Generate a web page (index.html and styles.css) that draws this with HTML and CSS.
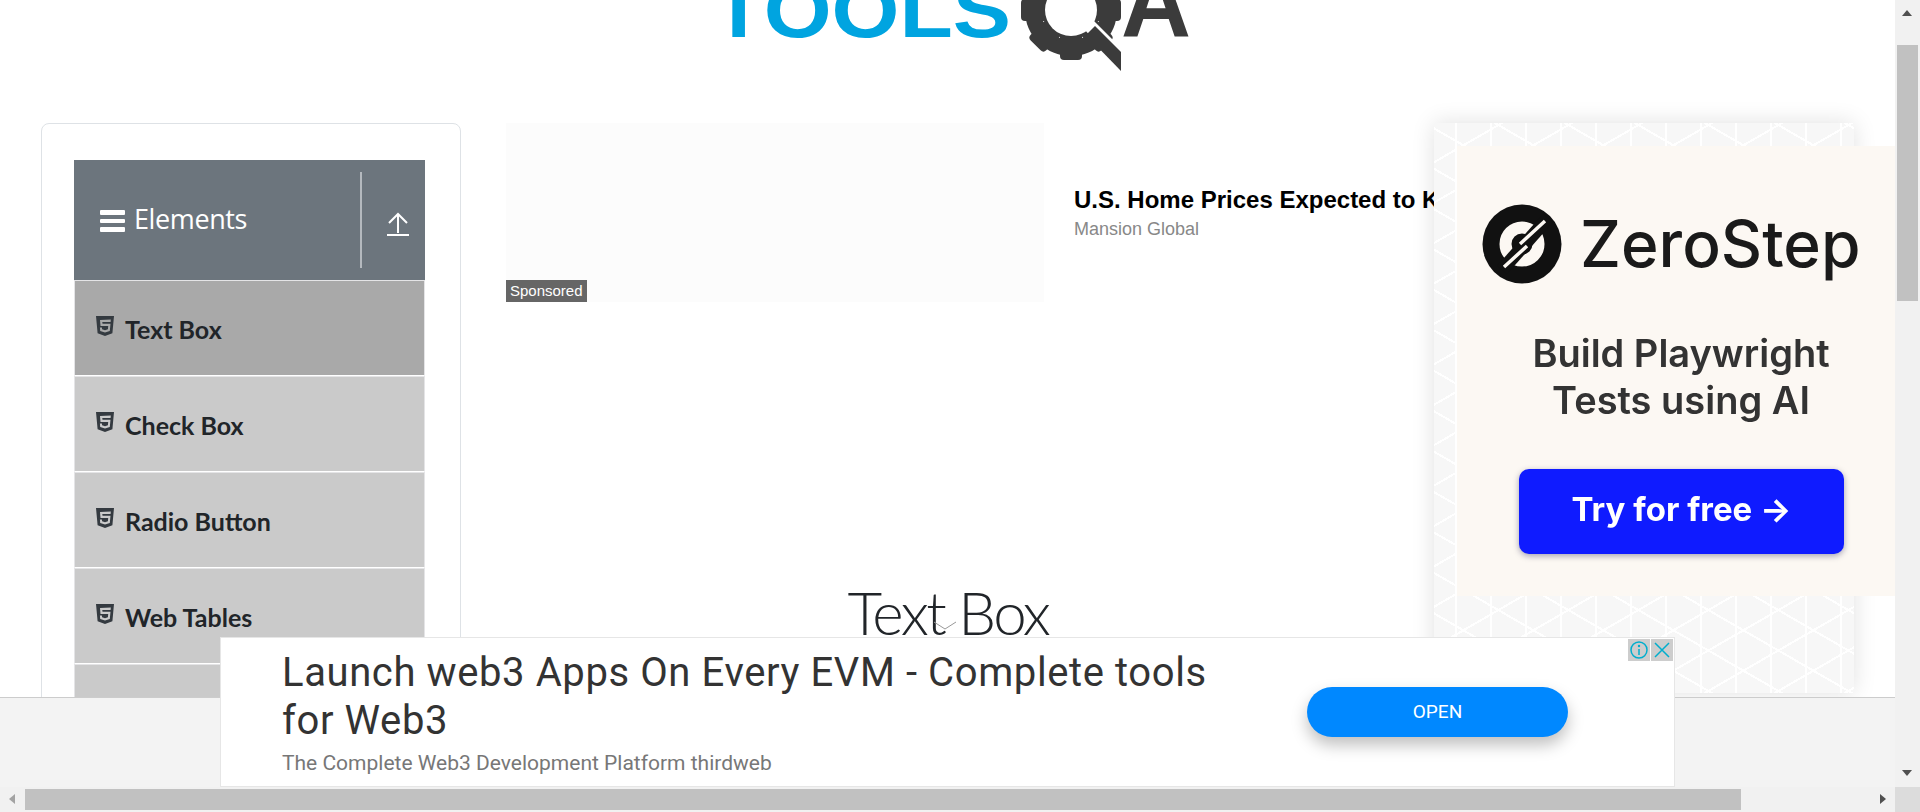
FILE: index.html
```html
<!DOCTYPE html>
<html lang="en">
<head>
  <meta charset="UTF-8">
  <meta name="viewport" content="width=device-width, initial-scale=1.0">
  <title>Text Box</title>
  <link rel="stylesheet" href="styles.css">
</head>
<body>

  <div class="window">
    <div class="viewRow">
      <div class="viewport">

        <!-- Logo, page is scrolled so only the bottom is visible -->
        <header class="pageHeader">
          <svg class="logo" width="500" height="72" viewBox="0 0 500 72">
            <text class="logoTools" x="12" y="37" textLength="299" lengthAdjust="spacingAndGlyphs">TOOLS</text>
            <g transform="translate(371 10)">
              <circle class="gearRing" r="38" />
              <g class="gearTeeth">
                <rect x="-11" y="-50" width="22" height="100" rx="4" />
                <rect x="-11" y="-50" width="22" height="100" rx="4" transform="rotate(45)" />
                <rect x="-11" y="-50" width="22" height="100" rx="4" transform="rotate(90)" />
                <rect x="-11" y="-50" width="22" height="100" rx="4" transform="rotate(135)" />
              </g>
              <circle class="gearHole" r="26" />
            </g>
            <polygon class="logoCut" points="384,29 393,20 429,56 429,78" />
            <polygon class="logoDark" points="386,35 395,26 421,52 421,71" />
            <text class="logoA" x="421" y="37" textLength="70" lengthAdjust="spacingAndGlyphs">A</text>
          </svg>
        </header>

        <div class="columns">

          <!-- Left menu -->
          <aside class="sideCard">
            <div class="groupHeader">
              <div class="groupTitle">
                <svg class="menuIcon" width="25" height="22" viewBox="0 0 25 22">
                  <rect x="0" y="0" width="25" height="5" rx="1" />
                  <rect x="0" y="9" width="25" height="4" rx="1" />
                  <rect x="0" y="17" width="25" height="5" rx="1" />
                </svg>
                <span>Elements</span>
              </div>
              <div class="groupToggle">
                <svg width="22" height="24" viewBox="0 0 22 24">
                  <path class="uploadStroke" d="M11 21V3M2 11l9-9 9 9M0 23h22" />
                </svg>
              </div>
            </div>
            <ul class="menuList">
              <li class="menuItem active"><svg class="htmlIcon" viewBox="0 0 18 20"><use href="#html5" /></svg>Text Box</li>
              <li class="menuItem"><svg class="htmlIcon" viewBox="0 0 18 20"><use href="#html5" /></svg>Check Box</li>
              <li class="menuItem"><svg class="htmlIcon" viewBox="0 0 18 20"><use href="#html5" /></svg>Radio Button</li>
              <li class="menuItem"><svg class="htmlIcon" viewBox="0 0 18 20"><use href="#html5" /></svg>Web Tables</li>
              <li class="menuItem"><svg class="htmlIcon" viewBox="0 0 18 20"><use href="#html5" /></svg>Buttons</li>
            </ul>
          </aside>

          <!-- Middle column -->
          <main class="mainColumn">
            <div class="sponsoredRow">
              <div class="sponsoredImage">
                <span class="sponsoredTag">Sponsored</span>
              </div>
              <div class="sponsoredText">
                <div class="sponsoredTitle">U.S. Home Prices Expected to Keep Climbing</div>
                <div class="sponsoredSource">Mansion Global</div>
              </div>
            </div>
            <div class="titleWrap">
              <h1 class="pageTitle">Text Box</h1>
              <svg class="titleChevron" width="24" height="9" viewBox="0 0 24 9">
                <path d="M1 1l11 7 11-7" />
              </svg>
            </div>
          </main>

          <!-- Right ad -->
          <div class="sideAd">
            <div class="zeroStep">
              <div class="zeroBrand">
                <svg class="zeroLogo" width="80" height="80" viewBox="0 0 80 80">
                  <circle cx="40" cy="40" r="39.5" fill="#111" />
                  <circle cx="40" cy="40" r="16.500" fill="none" stroke="#fcf8f3" stroke-width="12" />
                  <path d="M20 66L66 14" stroke="#111" stroke-width="13" />
                  <path d="M63 17L38 40M45 42L22 63" stroke="#fcf8f3" stroke-width="3.500" />
                </svg>
                <span>ZeroStep</span>
              </div>
              <div class="zeroText">Build Playwright<br>Tests using AI</div>
              <div class="zeroButton">Try for free →</div>
            </div>
          </div>

        </div>

        <!-- Sticky bottom ad -->
        <div class="bottomBar">
          <div class="bottomAd">
            <div class="bottomAdText">
              <div class="bottomAdTitle">Launch web3 Apps On Every EVM - Complete tools for Web3</div>
              <div class="bottomAdSub">The Complete Web3 Development Platform thirdweb</div>
            </div>
            <div class="openButton">OPEN</div>
            <div class="adBadges">
              <span class="adBadge">
                <svg width="18" height="18" viewBox="0 0 18 18">
                  <circle class="badgeStroke" cx="9" cy="9" r="8" />
                  <path class="badgeStroke" d="M9 8v6" />
                  <circle class="badgeDot" cx="9" cy="5" r="1.2" />
                </svg>
              </span>
              <span class="adBadge">
                <svg width="16" height="16" viewBox="0 0 16 16">
                  <path class="badgeStroke" d="M1 1l14 14M15 1L1 15" />
                </svg>
              </span>
            </div>
          </div>
        </div>

      </div>

      <div class="vScroll">
        <span class="arrow arrowUp"></span>
        <div class="vThumb"></div>
        <span class="arrow arrowDown"></span>
      </div>
    </div>

    <div class="hScrollRow">
      <div class="hScroll">
        <span class="arrow arrowLeft"></span>
        <div class="hThumb"></div>
        <span class="arrow arrowRight"></span>
      </div>
      <div class="scrollCorner"></div>
    </div>
  </div>

  <svg class="iconDefs" width="0" height="0">
    <symbol id="html5" viewBox="0 0 18 20">
      <path fill="#343a40" fill-rule="evenodd" d="M0 0h18l-1.6 17.2L9 20l-7.400-2.800zM4 4l.5 6h7.700l-.3 3.300-2.900.9-2.900-.9-.2-1.800H3.900l.3 3.500L9 16.500l4.800-1.500.7-7.200H6.500l-.2-1.700h8.300l.2-2.600z" />
    </symbol>
  </svg>

</body>
</html>
```

FILE: styles.css
```css
html, body {
  margin: 0;
  padding: 0;
  height: 100%;
  overflow: hidden;
  background-color: #fff;
}

.window {
  display: flex;
  flex-direction: column;
  width: 1920px;
  height: 812px;
}

.viewRow {
  display: flex;
  height: 787px;
}

.viewport {
  position: relative;
  width: 1895px;
  height: 787px;
  overflow: hidden;
}

/* logo */
.pageHeader {
  height: 123px;
  padding-left: 700px;
  box-sizing: border-box;
}

.logo {
  display: block;
}

.logoTools {
  font-family: "Liberation Sans", sans-serif;
  font-weight: 700;
  font-size: 78px;
  fill: #00a4e0;
}

.logoA {
  font-family: "Liberation Sans", sans-serif;
  font-weight: 700;
  font-size: 100px;
  fill: #3b3b3b;
}

.gearRing {
  fill: none;
  stroke: #3b3b3b;
  stroke-width: 16;
}

.gearTeeth rect {
  fill: #3b3b3b;
}

.gearHole {
  fill: #fff;
}

.logoCut {
  fill: #fff;
}

.logoDark {
  fill: #3b3b3b;
}

.columns {
  display: flex;
  align-items: flex-start;
  padding-left: 41px;
}

/* left menu */
.sideCard {
  flex: none;
  box-sizing: border-box;
  width: 420px;
  height: 800px;
  padding: 36px 35px 0 32px;
  border: 1px solid #dee2e6;
  border-radius: 8px;
  background-color: #fff;
}

.groupHeader {
  display: flex;
  align-items: stretch;
  height: 120px;
  padding: 12px 0;
  box-sizing: border-box;
  background-color: #6c757d;
  color: #fff;
}

.groupTitle {
  flex: 1;
  display: flex;
  align-items: center;
  gap: 9px;
  padding-left: 26px;
  font-family: "Open Sans", sans-serif;
  font-size: 27px;
  font-weight: 400;
  letter-spacing: -0.4px;
  border-right: 2px solid #b4b9be;
}

.groupTitle span {
  position: relative;
  top: -2px;
}

.menuIcon {
  fill: #fff;
  margin-top: 2px;
}

.groupToggle {
  flex: none;
  width: 63px;
  display: flex;
  align-items: center;
  justify-content: center;
  padding: 8px 0 0 9px;
  box-sizing: border-box;
}

.uploadStroke {
  fill: none;
  stroke: #fff;
  stroke-width: 2;
}

.menuList {
  list-style: none;
  margin: 0;
  padding: 0;
}

.menuItem {
  display: flex;
  align-items: center;
  gap: 11px;
  box-sizing: border-box;
  height: 96px;
  padding: 2px 0 0 21px;
  border: 1px solid #e4e4e6;
  border-bottom-color: #fff;
  background-color: #cacaca;
  color: #212529;
  font-family: "Lato", sans-serif;
  font-size: 25px;
  font-weight: 700;
}

.menuItem.active {
  background-color: #a9a9a9;
}

.htmlIcon {
  width: 18px;
  height: 20px;
  margin-top: -6px;
}

.iconDefs {
  position: absolute;
}

/* middle column */
.mainColumn {
  flex: none;
  width: 884px;
  margin-left: 45px;
}

.sponsoredRow {
  display: flex;
  align-items: center;
  width: 928px;
  height: 179px;
  overflow: hidden;
  font-family: "Liberation Sans", Arial, sans-serif;
}

.sponsoredImage {
  flex: none;
  position: relative;
  width: 538px;
  height: 179px;
  background-color: #fcfcfc;
}

.sponsoredTag {
  position: absolute;
  left: 0;
  bottom: 0;
  padding: 2px 4px;
  background-color: #666;
  color: #fff;
  font-size: 15px;
  line-height: 18px;
}

.sponsoredText {
  flex: none;
  margin-left: 30px;
  white-space: nowrap;
}

.sponsoredTitle {
  font-size: 24px;
  font-weight: 700;
  line-height: 28px;
  color: #000;
}

.sponsoredSource {
  margin-top: 4px;
  font-size: 18px;
  line-height: 22px;
  color: #888;
}

.titleWrap {
  position: relative;
  margin-top: 274px;
}

.pageTitle {
  margin: 0;
  text-align: center;
  font-family: "Lato", sans-serif;
  font-size: 60px;
  font-weight: 300;
  letter-spacing: -2.5px;
  line-height: 72px;
  color: #212529;
}

.titleChevron {
  position: absolute;
  left: 427px;
  top: 45px;
}

.titleChevron path {
  fill: none;
  stroke: #999;
  stroke-width: 1;
}

/* right ad */
.sideAd {
  flex: none;
  box-sizing: border-box;
  width: 420px;
  height: 570px;
  margin-left: 44px;
  padding: 23px 0 0 23px;
  background-color: #f7f7f7;
  background-image:
    repeating-linear-gradient(90deg, transparent 0 21px, #fff 21px 23px, transparent 23px 35px),
    repeating-linear-gradient(30deg, transparent 0 33px, #fff 33px 35px),
    repeating-linear-gradient(150deg, transparent 0 33px, #fff 33px 35px);
  box-shadow: 0 0 22px rgba(0, 0, 0, 0.12);
}

.zeroStep {
  box-sizing: border-box;
  width: 438px;
  height: 450px;
  padding-top: 58px;
  background-color: #fcf8f3;
  font-family: "Inter", sans-serif;
  color: #1a1a1a;
}

.zeroBrand {
  display: flex;
  align-items: center;
  gap: 18px;
  padding-left: 25px;
  font-size: 64px;
  font-weight: 500;
  line-height: 80px;
  filter: blur(0.5px);
}

.zeroText {
  margin-top: 46px;
  margin-left: 24px;
  width: 400px;
  text-align: center;
  font-size: 38px;
  font-weight: 600;
  line-height: 47px;
  color: #333;
  filter: blur(0.5px);
}

.zeroButton {
  width: 325px;
  height: 85px;
  margin: 45px 0 0 62px;
  border-radius: 10px;
  background-color: #0f1bff;
  box-shadow: 0 2px 6px rgba(0, 0, 60, 0.35);
  color: #fff;
  font-size: 33px;
  font-weight: 700;
  line-height: 80px;
  text-align: center;
  filter: blur(0.5px);
}

/* bottom sticky ad */
.bottomBar {
  position: absolute;
  left: 0;
  right: 0;
  bottom: 0;
  display: flex;
  align-items: flex-end;
  height: 90px;
  padding-left: 220px;
  box-sizing: border-box;
  border-top: 1px solid #ccc;
  background-color: #f3f3f3;
}

.bottomAd {
  position: relative;
  display: flex;
  flex: none;
  box-sizing: border-box;
  width: 1455px;
  height: 150px;
  padding: 11px 0 0 61px;
  border: 1px solid #e6e6e6;
  background-color: #fff;
}

.bottomAdText {
  flex: none;
  width: 960px;
  font-family: "Roboto", sans-serif;
}

.bottomAdTitle {
  width: 950px;
  font-size: 40px;
  letter-spacing: 0.6px;
  line-height: 48px;
  color: #333;
}

.bottomAdSub {
  margin-top: 6px;
  font-size: 21px;
  line-height: 24px;
  color: #777;
}

.openButton {
  flex: none;
  width: 261px;
  height: 50px;
  margin: 38px 0 0 65px;
  border-radius: 25px;
  background-color: #0088ff;
  box-shadow: 0 8px 16px rgba(0, 0, 0, 0.25);
  color: #fff;
  font-family: "Roboto", sans-serif;
  font-size: 19px;
  line-height: 50px;
  text-align: center;
}

.adBadges {
  position: absolute;
  top: 1px;
  right: 1px;
  display: flex;
  gap: 1px;
}

.adBadge {
  display: flex;
  align-items: center;
  justify-content: center;
  width: 22px;
  height: 22px;
  background-color: #cdcdcd;
}

.badgeStroke {
  fill: none;
  stroke: #00aecd;
  stroke-width: 1.500;
}

.badgeDot {
  fill: #00aecd;
}

/* scrollbars */
.vScroll {
  position: relative;
  width: 25px;
  height: 787px;
  background-color: #f1f1f1;
}

.vThumb {
  width: 21px;
  height: 256px;
  margin-left: 2px;
  position: relative;
  top: 45px;
  background-color: #c1c1c1;
}

.hScrollRow {
  display: flex;
  height: 25px;
}

.hScroll {
  position: relative;
  width: 1895px;
  background-color: #f1f1f1;
}

.hThumb {
  width: 1716px;
  height: 21px;
  margin: 2px 0 0 25px;
  background-color: #c1c1c1;
}

.scrollCorner {
  width: 25px;
  background-color: #dcdcdc;
}

.arrow {
  position: absolute;
  width: 0;
  height: 0;
  border-style: solid;
  border-color: transparent;
}

.arrowUp {
  top: 10px;
  left: 7px;
  border-width: 0 5.500px 6px;
  border-bottom-color: #505050;
}

.arrowDown {
  bottom: 11px;
  left: 7px;
  border-width: 6px 5.500px 0;
  border-top-color: #505050;
}

.arrowLeft {
  top: 7px;
  left: 9px;
  border-width: 5.500px 6px 5.500px 0;
  border-right-color: #a3a3a3;
}

.arrowRight {
  top: 7px;
  right: 9px;
  border-width: 5.500px 0 5.500px 6px;
  border-left-color: #505050;
}
```
